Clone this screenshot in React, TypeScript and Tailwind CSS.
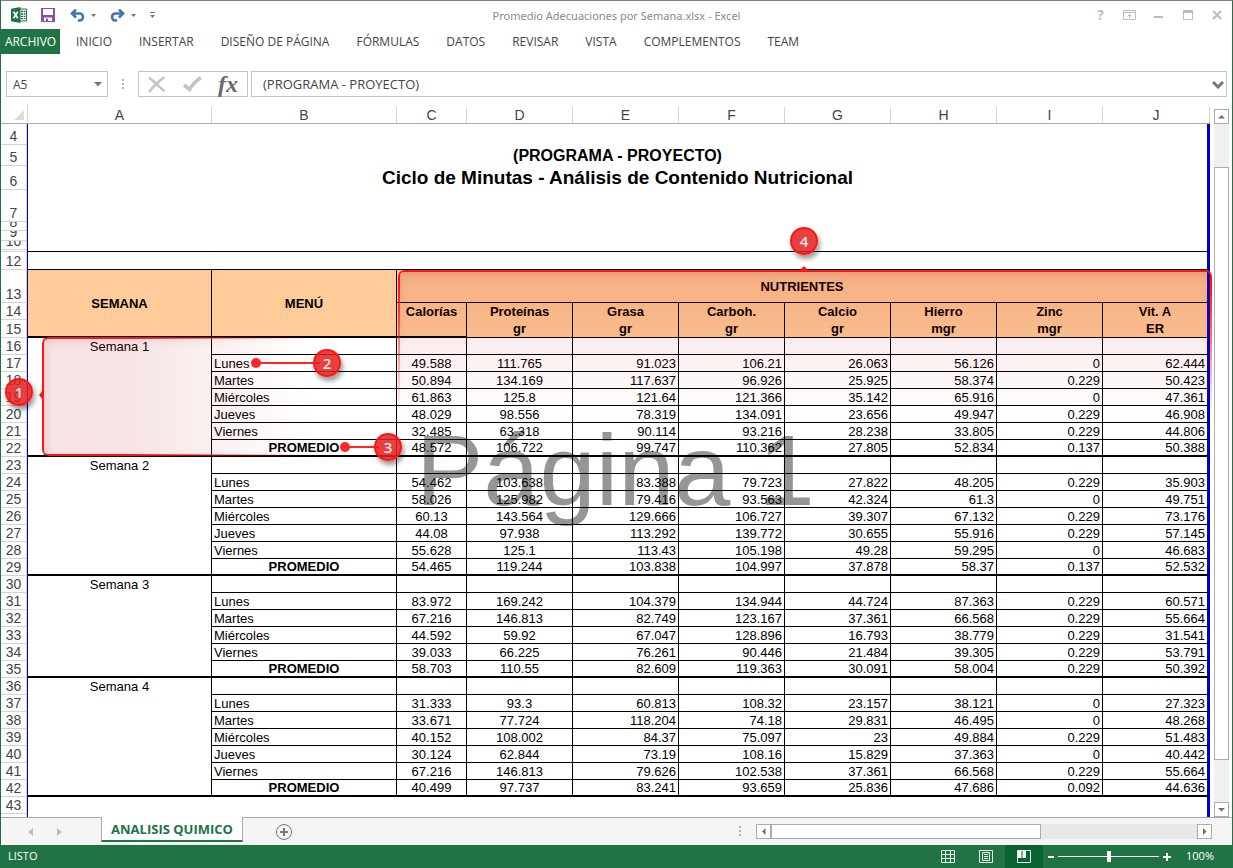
import { Fragment } from "react";
import type { ReactNode } from "react";

type DayRow = { day: string; values: string[] };
type Week = { name: string; firstRow: number; days: DayRow[] };

const tabs = [
  "INICIO",
  "INSERTAR",
  "DISEÑO DE PÁGINA",
  "FÓRMULAS",
  "DATOS",
  "REVISAR",
  "VISTA",
  "COMPLEMENTOS",
  "TEAM",
];

const columns = ["A", "B", "C", "D", "E", "F", "G", "H", "I", "J"];

const nutrients = [
  ["Calorías", ""],
  ["Proteínas", "gr"],
  ["Grasa", "gr"],
  ["Carboh.", "gr"],
  ["Calcio", "gr"],
  ["Hierro", "mgr"],
  ["Zinc", "mgr"],
  ["Vit. A", "ER"],
];

const day = (name: string, line: string): DayRow => ({ day: name, values: line.split(" ") });

const weeks: Week[] = [
  {
    name: "Semana 1",
    firstRow: 16,
    days: [
      day("Lunes", "49.588 111.765 91.023 106.21 26.063 56.126 0 62.444"),
      day("Martes", "50.894 134.169 117.637 96.926 25.925 58.374 0.229 50.423"),
      day("Miércoles", "61.863 125.8 121.64 121.366 35.142 65.916 0 47.361"),
      day("Jueves", "48.029 98.556 78.319 134.091 23.656 49.947 0.229 46.908"),
      day("Viernes", "32.485 63.318 90.114 93.216 28.238 33.805 0.229 44.806"),
      day("PROMEDIO", "48.572 106.722 99.747 110.362 27.805 52.834 0.137 50.388"),
    ],
  },
  {
    name: "Semana 2",
    firstRow: 23,
    days: [
      day("Lunes", "54.462 103.638 83.388 79.723 27.822 48.205 0.229 35.903"),
      day("Martes", "58.026 125.982 79.416 93.563 42.324 61.3 0 49.751"),
      day("Miércoles", "60.13 143.564 129.666 106.727 39.307 67.132 0.229 73.176"),
      day("Jueves", "44.08 97.938 113.292 139.772 30.655 55.916 0.229 57.145"),
      day("Viernes", "55.628 125.1 113.43 105.198 49.28 59.295 0 46.683"),
      day("PROMEDIO", "54.465 119.244 103.838 104.997 37.878 58.37 0.137 52.532"),
    ],
  },
  {
    name: "Semana 3",
    firstRow: 30,
    days: [
      day("Lunes", "83.972 169.242 104.379 134.944 44.724 87.363 0.229 60.571"),
      day("Martes", "67.216 146.813 82.749 123.167 37.361 66.568 0.229 55.664"),
      day("Miércoles", "44.592 59.92 67.047 128.896 16.793 38.779 0.229 31.541"),
      day("Viernes", "39.033 66.225 76.261 90.446 21.484 39.305 0.229 53.791"),
      day("PROMEDIO", "58.703 110.55 82.609 119.363 30.091 58.004 0.229 50.392"),
    ],
  },
  {
    name: "Semana 4",
    firstRow: 36,
    days: [
      day("Lunes", "31.333 93.3 60.813 108.32 23.157 38.121 0 27.323"),
      day("Martes", "33.671 77.724 118.204 74.18 29.831 46.495 0 48.268"),
      day("Miércoles", "40.152 108.002 84.37 75.097 23 49.884 0.229 51.483"),
      day("Jueves", "30.124 62.844 73.19 108.16 15.829 37.363 0 40.442"),
      day("Viernes", "67.216 146.813 79.626 102.538 37.361 66.568 0.229 55.664"),
      day("PROMEDIO", "40.499 97.737 83.241 93.659 25.836 47.686 0.092 44.636"),
    ],
  },
];

const rightEdge = "border-r-[3px] border-r-[#0000c8]";

function RowHead({ n, h = "h-[17px]" }: { n: number | string; h?: string }) {
  return (
    <th scope="row" className="border-r border-r-[#0000c8] p-0 align-bottom font-normal">
      <div
        className={`flex ${h} items-end justify-center overflow-hidden border-r border-b border-[#d4d4d4] bg-white text-[14px] leading-4 text-[#444]`}
      >
        {n}
      </div>
    </th>
  );
}

function BlankRow({ n, h, line, children }: { n: number | string; h: string; line?: boolean; children?: ReactNode }) {
  return (
    <tr>
      <RowHead n={n} h={h} />
      <td colSpan={10} className={`p-0 text-center font-bold ${rightEdge} ${line ? "border-b border-b-black" : ""}`}>
        {children}
      </td>
    </tr>
  );
}

function valueAlign(i: number) {
  return i < 2 ? "text-center" : "text-right";
}

function WeekRows({ week }: { week: Week }) {
  return (
    <Fragment>
      <tr>
        <RowHead n={week.firstRow} />
        <td
          rowSpan={week.days.length + 1}
          className="border-r border-b-2 border-black p-0 text-center align-top leading-[17px]"
        >
          {week.name}
        </td>
        <td className="border-r border-b border-black p-0" />
        {nutrients.map(([name], i) => (
          <td key={name} className={`border-b border-black p-0 ${i === 7 ? rightEdge : "border-r"}`} />
        ))}
      </tr>
      {week.days.map((row, r) => {
        const last = r === week.days.length - 1;
        const bottom = last ? "border-b-2" : "border-b";
        return (
          <tr key={row.day}>
            <RowHead n={week.firstRow + r + 1} />
            <td className={`border-r border-black px-[2px] py-0 ${bottom} ${last ? "text-center font-bold" : ""}`}>
              {row.day}
            </td>
            {row.values.map((v, i) => (
              <td
                key={i}
                className={`border-black px-[2px] py-0 ${bottom} ${valueAlign(i)} ${i === 7 ? rightEdge : "border-r"}`}
              >
                {v}
              </td>
            ))}
          </tr>
        );
      })}
    </Fragment>
  );
}

function Sheet() {
  return (
    <table className="w-full table-fixed border-separate border-spacing-0 font-['Liberation_Sans',Arial,sans-serif] text-[13px] leading-[15px] text-black">
      <colgroup>
        <col className="w-[27px]" />
        <col className="w-[184px]" />
        <col className="w-[185px]" />
        <col className="w-[70px]" />
        <col className="w-[106px]" />
        <col className="w-[106px]" />
        <col className="w-[106px]" />
        <col className="w-[106px]" />
        <col className="w-[106px]" />
        <col className="w-[106px]" />
        <col className="w-[107px]" />
      </colgroup>
      <thead>
        <tr className="h-5 text-[14px] text-[#444]">
          <th className="border-b border-[#ababab] p-0">
            <button type="button" aria-label="Seleccionar todo" className="flex h-[19px] w-full items-end justify-end border-r border-[#d4d4d4] pr-[3px] pb-[3px]">
              <svg width="10" height="10" viewBox="0 0 10 10">
                <path d="M10 0V10H0Z" fill="#dcdcdc" />
              </svg>
            </button>
          </th>
          {columns.map((c) => (
            <th key={c} scope="col" className="border-b border-[#ababab] p-0 pt-[3px] font-normal">
              <div className="border-r border-[#d4d4d4] leading-4">{c}</div>
            </th>
          ))}
        </tr>
      </thead>
      <tbody>
        <BlankRow n={4} h="h-[21px]" />
        <BlankRow n={5} h="h-[21px]">
          <span className="text-base leading-5">(PROGRAMA - PROYECTO)</span>
        </BlankRow>
        <BlankRow n={6} h="h-6">
          <span className="text-[19px] leading-[22px]">Ciclo de Minutas - Análisis de Contenido Nutricional</span>
        </BlankRow>
        <BlankRow n={7} h="h-8" />
        <BlankRow n={8} h="h-[9px]" />
        <BlankRow n={9} h="h-[10px]" />
        <BlankRow n={10} h="h-[9px]" />
        <BlankRow n="" h="h-[2px]" line />
        <BlankRow n={12} h="h-[18px]" line />
        <tr className="bg-[#ffcc99] font-bold">
          <RowHead n={13} h="h-[33px]" />
          <th rowSpan={3} className="border-r border-b-2 border-black p-0">
            SEMANA
          </th>
          <th rowSpan={3} className="border-r border-b-2 border-black p-0">
            MENÚ
          </th>
          <th colSpan={8} className={`border-b border-black p-0 ${rightEdge}`}>
            NUTRIENTES
          </th>
        </tr>
        <tr className="bg-[#ffcc99]">
          <RowHead n={14} />
          {nutrients.map(([name, unit], i) => (
            <th
              key={name}
              rowSpan={2}
              className={`border-black p-0 align-top leading-[17px] ${i === 0 ? "border-b-2" : "border-b"} ${i === 7 ? rightEdge : "border-r"}`}
            >
              {name}
              <br />
              {unit}
            </th>
          ))}
        </tr>
        <tr>
          <RowHead n={15} h="h-[18px]" />
        </tr>
        {weeks.map((w) => (
          <WeekRows key={w.name} week={w} />
        ))}
        <BlankRow n={43} h="h-[17px]" />
        <BlankRow n="" h="h-[17px]" />
      </tbody>
    </table>
  );
}

function Bubble({ n, place }: { n: number; place: string }) {
  return (
    <div
      className={`absolute flex size-7 items-center justify-center rounded-full border-2 border-[#ff1414] bg-[#e02020]/85 text-[15px] font-medium text-white/90 shadow-[2px_4px_5px_rgba(0,0,0,0.4)] ${place}`}
    >
      {n}
    </div>
  );
}

function Callouts() {
  return (
    <div className="pointer-events-none absolute inset-0 z-10 font-['Noto_Sans','Open_Sans',sans-serif]">
      <div className="absolute top-[233px] left-[41px] h-[119px] w-[270px] rounded-md border-2 border-r-0 border-[#ff1414] bg-[#b40000]/11 shadow-[inset_3px_3px_8px_rgba(120,0,0,0.1),0_-2px_5px_rgba(0,0,0,0.08)] [mask-image:linear-gradient(to_right,black_30%,transparent)]" />
      <svg className="absolute top-[285px] left-[37px]" width="8" height="12" viewBox="0 0 8 12">
        <path d="M5 1 1 6 5 11Z" fill="#ff1414" />
      </svg>
      <div className="absolute top-[166px] -right-[2px] left-[397px] h-[144px] rounded-t-md border-2 border-b-0 border-[#ff1414] bg-[#b40000]/13 shadow-[inset_0_4px_8px_rgba(120,0,0,0.12),0_-2px_6px_rgba(0,0,0,0.1)] [mask-image:linear-gradient(to_bottom,black_10%,transparent)]" />
      <svg className="absolute top-[161px] left-[797px]" width="12" height="7" viewBox="0 0 12 7">
        <path d="M1 6 6 1 11 6Z" fill="#ff1414" />
      </svg>
      <svg className="absolute top-[253px] left-[249px]" width="70" height="12" viewBox="0 0 70 12">
        <path d="M6 6H70" stroke="#ff2626" strokeWidth="2" />
        <circle cx="6" cy="6" r="5" fill="#ff2626" />
      </svg>
      <svg className="absolute top-[337px] left-[338px]" width="40" height="12" viewBox="0 0 40 12">
        <path d="M6 6H40" stroke="#ff2626" strokeWidth="2" />
        <circle cx="6" cy="6" r="5" fill="#ff2626" />
      </svg>
      <Bubble n={1} place="top-[274px] left-1" />
      <Bubble n={2} place="top-[245px] left-[312px]" />
      <Bubble n={3} place="top-[329px] left-[373px]" />
      <Bubble n={4} place="top-[123px] left-[789px]" />
    </div>
  );
}

function Arrow({ d }: { d: string }) {
  return (
    <svg width="7" height="7" viewBox="0 0 7 7" fill="#6d6d6d">
      <path d={d} />
    </svg>
  );
}

const scrollButton = "flex size-[15px] shrink-0 items-center justify-center border border-[#ababab] bg-white";

function TitleBar() {
  return (
    <header className="grid h-7 shrink-0 grid-cols-[1fr_auto_1fr] items-center text-[#8a8a8a]">
      <div className="flex items-center pl-[10px]">
        <svg width="16" height="16" viewBox="0 0 16 16" aria-label="Excel">
          <path d="M8.500 2H15.500V14H8.500Z" fill="#fff" stroke="#217346" />
          <path d="M10 4.500H12M12.700 4.500H14.500M10 7H12M12.700 7H14.500M10 9.300H12M12.700 9.300H14.500M10 11.600H12M12.700 11.600H14.500" stroke="#217346" strokeWidth="1.300" />
          <path d="M0 1.800 9.500 0V16L0 14.200Z" fill="#217346" />
          <path d="M2.500 4.800 6.800 11.200M6.800 4.800 2.500 11.200" stroke="#fff" strokeWidth="1.700" />
        </svg>
        <button type="button" aria-label="Guardar" className="ml-[14px]">
          <svg width="14" height="14" viewBox="0 0 14 14">
            <path d="M0 0H14V14H0Z" fill="#8652a8" />
            <path d="M2 1H12V7H2ZM3 9.500H11V13H7V10.500H5V13H3Z" fill="#fff" />
          </svg>
        </button>
        <button type="button" aria-label="Deshacer" className="ml-[15px] flex items-center gap-[6px]">
          <svg width="15" height="13" viewBox="0 0 15 13" fill="none" stroke="#3f75b5" strokeWidth="2.600">
            <path d="M1.500 4.500H9.500A3.500 3.500 0 0 1 9.500 11.500H8M6 .500 2 4.500 6 8.500" />
          </svg>
          <svg width="5" height="3" viewBox="0 0 5 3"><path d="M0 0H5L2.500 3Z" fill="#777" /></svg>
        </button>
        <button type="button" aria-label="Rehacer" className="ml-[14px] flex items-center gap-[6px]">
          <svg width="15" height="13" viewBox="0 0 15 13" fill="none" stroke="#3f75b5" strokeWidth="2.600">
            <path d="M13.500 4.500H5.500A3.500 3.500 0 0 0 5.500 11.500H7M9 .500 13 4.500 9 8.500" />
          </svg>
          <svg width="5" height="3" viewBox="0 0 5 3"><path d="M0 0H5L2.500 3Z" fill="#777" /></svg>
        </button>
        <button type="button" aria-label="Personalizar barra de herramientas" className="ml-[14px]">
          <svg width="5" height="6" viewBox="0 0 5 6"><path d="M0 0H5V1H0ZM0 3H5L2.500 6Z" fill="#777" /></svg>
        </button>
      </div>
      <h1 className="pt-[2px] font-['Noto_Sans','Open_Sans',sans-serif] text-[11px]">Promedio Adecuaciones por Semana.xlsx - Excel</h1>
      <div className="flex items-center justify-end pr-[1px] text-[#bdbdbd]">
        <button type="button" aria-label="Ayuda" className="flex w-[29px] justify-center text-sm leading-4 font-bold">?</button>
        <button type="button" aria-label="Opciones de presentación" className="flex w-[29px] justify-center">
          <svg width="13" height="10" viewBox="0 0 13 10" fill="none" stroke="currentColor">
            <path d="M.5 .5H12.500V9.500H.5ZM1 2.500H12M6.500 8.500V4.500M4.500 6.500 6.500 4.500 8.500 6.500" />
          </svg>
        </button>
        <button type="button" aria-label="Minimizar" className="flex w-[29px] justify-center">
          <svg width="9" height="10" viewBox="0 0 9 10"><path d="M0 6H9V8H0Z" fill="currentColor" /></svg>
        </button>
        <button type="button" aria-label="Maximizar" className="flex w-[29px] justify-center">
          <svg width="10" height="10" viewBox="0 0 10 10"><path d="M0 0H10V10H0ZM1 3V9H9V3Z" fill="currentColor" fillRule="evenodd" /></svg>
        </button>
        <button type="button" aria-label="Cerrar" className="flex w-[29px] justify-center">
          <svg width="10" height="10" viewBox="0 0 10 10"><path d="M1 1 9 9M9 1 1 9" stroke="currentColor" strokeWidth="2.200" /></svg>
        </button>
      </div>
    </header>
  );
}

function Dots() {
  return (
    <svg width="3" height="11" viewBox="0 0 3 11" fill="#b5b5b5">
      <path d="M0 0H2V2H0ZM0 4H2V6H0ZM0 8H2V10H0Z" />
    </svg>
  );
}

export default function App() {
  return (
    <div className="flex h-screen flex-col overflow-hidden border-x border-t border-x-[#217346] border-t-[#808080] bg-white font-['Open_Sans','Noto_Sans',sans-serif] text-[#444]">
      <TitleBar />

      <nav className="flex h-[25px] shrink-0 items-center text-xs">
        <button type="button" className="mr-4 flex h-full w-[59px] items-center justify-center bg-[#217346] text-white">
          ARCHIVO
        </button>
        <div className="flex gap-[27px]">
          {tabs.map((t) => (
            <button key={t} type="button" className="whitespace-nowrap">
              {t}
            </button>
          ))}
        </div>
      </nav>

      <div className="mt-[17px] flex h-[26px] shrink-0 items-stretch pr-[5px] pl-[5px] text-[13px]">
        <div className="flex w-[102px] items-center border border-[#c6c6c6] pr-[5px] pl-[6px]">
          <input aria-label="Cuadro de nombres" defaultValue="A5" className="w-full min-w-0 pt-[2px] text-xs outline-none" />
          <button type="button" aria-label="Lista de nombres">
            <svg width="8" height="5" viewBox="0 0 8 5"><path d="M0 0H8L4 4.500Z" fill="#777" /></svg>
          </button>
        </div>
        <div className="flex w-[30px] items-center justify-center">
          <Dots />
        </div>
        <div className="flex w-[110px] items-center justify-between border border-[#c6c6c6] pr-[9px] pl-[9px]">
          <button type="button" aria-label="Cancelar">
            <svg width="18" height="17" viewBox="0 0 18 17"><path d="M1 1.500Q9 8 16.500 15.500M16.500 1Q8 7 1 16" stroke="#c4c4c4" strokeWidth="2.400" fill="none" /></svg>
          </button>
          <button type="button" aria-label="Introducir">
            <svg width="19" height="16" viewBox="0 0 19 16"><path d="M1 9 6.500 13.500Q10 7 18 1.500" stroke="#c4c4c4" strokeWidth="3.600" fill="none" /></svg>
          </button>
          <button type="button" aria-label="Insertar función" className="font-['Liberation_Serif',serif] text-[24px] leading-6 font-bold text-[#6a6a6a] italic">
            fx
          </button>
        </div>
        <div className="ml-[3px] flex flex-1 items-center border border-[#c6c6c6] pr-[2px] pl-[11px]">
          <input aria-label="Barra de fórmulas" defaultValue="(PROGRAMA - PROYECTO)" className="min-w-0 flex-1 pt-[2px] outline-none" />
          <button type="button" aria-label="Expandir barra de fórmulas" className="pt-[2px]">
            <svg width="12" height="8" viewBox="0 0 12 8"><path d="M1 1 6 6 11 1" stroke="#777" strokeWidth="3" fill="none" /></svg>
          </button>
        </div>
      </div>

      <main className="mt-[7px] flex min-h-0 flex-1">
        <div className="relative min-w-0 flex-1">
          <div className="relative h-full overflow-hidden">
            <div className="absolute top-[316px] left-[415px] font-['Liberation_Sans',Arial,sans-serif] text-[101px] leading-none text-[#969696]">
              Página 1
            </div>
            <div className="relative">
              <Sheet />
            </div>
          </div>
          <Callouts />
        </div>
        <div className="flex w-[22px] shrink-0 flex-col items-center pt-[5px]">
          <button type="button" aria-label="Desplazar arriba" className={scrollButton}>
            <Arrow d="M0 5.500 3.500 2 7 5.500Z" />
          </button>
          <div className="flex w-[15px] flex-1 flex-col bg-[#f0f0f0] pt-[43px]">
            <div className="h-[593px] border border-[#ababab] bg-white" />
          </div>
          <button type="button" aria-label="Desplazar abajo" className={scrollButton}>
            <Arrow d="M0 2H7L3.500 5.500Z" />
          </button>
        </div>
      </main>

      <div className="flex h-7 shrink-0 bg-[#f5f5f5]">
        <div className="flex w-[100px] items-center gap-6 border-t border-[#ababab] pl-[27px]">
          <button type="button" aria-label="Hoja anterior"><svg width="5" height="8" viewBox="0 0 5 8"><path d="M5 0V8L0 4Z" fill="#bdbdbd" /></svg></button>
          <button type="button" aria-label="Hoja siguiente"><svg width="5" height="8" viewBox="0 0 5 8"><path d="M0 0V8L5 4Z" fill="#bdbdbd" /></svg></button>
        </div>
        <button type="button" className="h-[25px] w-[142px] border-x border-b-2 border-x-[#ababab] border-b-[#217346] bg-white pt-[3px] text-[13px] font-bold whitespace-nowrap text-[#217346]">
          ANALISIS QUIMICO
        </button>
        <div className="flex flex-1 items-center border-t border-[#ababab] pl-8">
          <button type="button" aria-label="Hoja nueva">
            <svg width="18" height="18" viewBox="0 0 18 18" fill="none" stroke="#777">
              <circle cx="9" cy="9" r="7.500" />
              <path d="M5 9H13M9 5V13" strokeWidth="2" />
            </svg>
          </button>
        </div>
        <div className="flex w-[493px] items-center border-t border-[#ababab] pr-[20px]">
          <Dots />
          <button type="button" aria-label="Desplazar a la izquierda" className={`ml-[14px] ${scrollButton}`}>
            <Arrow d="M5.500 0V7L2 3.500Z" />
          </button>
          <div className="h-[15px] flex-1 bg-[#e8e8e8]">
            <div className="h-[15px] w-[270px] border border-[#ababab] bg-white" />
          </div>
          <button type="button" aria-label="Desplazar a la derecha" className={scrollButton}>
            <Arrow d="M2 0V7L5.500 3.500Z" />
          </button>
        </div>
      </div>

      <footer className="flex h-[23px] shrink-0 items-center bg-[#217346] pr-[18px] pl-[7px] text-[11px] text-white">
        <span className="flex-1">LISTO</span>
        <button type="button" aria-label="Vista normal" className="flex h-full w-[38px] items-center justify-center">
          <svg width="14" height="14" viewBox="0 0 14 14" fill="none" stroke="#e4f0e8"><path d="M.5 .5H13.500V12.500H.5ZM.5 4.500H13.500M.5 8.500H13.500M4.500 0V13M9.500 0V13" /></svg>
        </button>
        <button type="button" aria-label="Diseño de página" className="flex h-full w-[38px] items-center justify-center">
          <svg width="14" height="14" viewBox="0 0 14 14" fill="none" stroke="#e4f0e8"><path d="M.5 .5H13.500V12.500H.5ZM3.500 2.500H10.500V10.500H3.500ZM5 4.500H9M5 6.500H9M5 8.500H9" /></svg>
        </button>
        <button type="button" aria-label="Vista previa de salto de página" className="flex h-full w-[38px] items-center justify-center bg-[#0a6332]">
          <svg width="14" height="14" viewBox="0 0 14 14"><path d="M.5 .5H13.500V12.500H.5Z" fill="none" stroke="#e4f0e8" /><path d="M1 1H4.500V8H1ZM5.500 1H9V8H5.500Z" fill="#fff" /></svg>
        </button>
        <button type="button" aria-label="Alejar" className="ml-[5px]">
          <svg width="6" height="8" viewBox="0 0 6 8"><path d="M0 3H6V5H0Z" fill="#fff" /></svg>
        </button>
        <input
          type="range"
          aria-label="Zoom"
          min={0}
          max={200}
          defaultValue={100}
          className="mx-1 h-3 w-[101px] appearance-none bg-[linear-gradient(white,white)] bg-[length:100%_1px] bg-center bg-no-repeat [&::-webkit-slider-thumb]:h-[11px] [&::-webkit-slider-thumb]:w-1 [&::-webkit-slider-thumb]:appearance-none [&::-webkit-slider-thumb]:bg-white"
        />
        <button type="button" aria-label="Acercar">
          <svg width="8" height="8" viewBox="0 0 8 8"><path d="M3 0H5V3H8V5H5V8H3V5H0V3H3Z" fill="#fff" /></svg>
        </button>
        <span className="ml-[14px] w-[29px] text-right">100%</span>
      </footer>
    </div>
  );
}
